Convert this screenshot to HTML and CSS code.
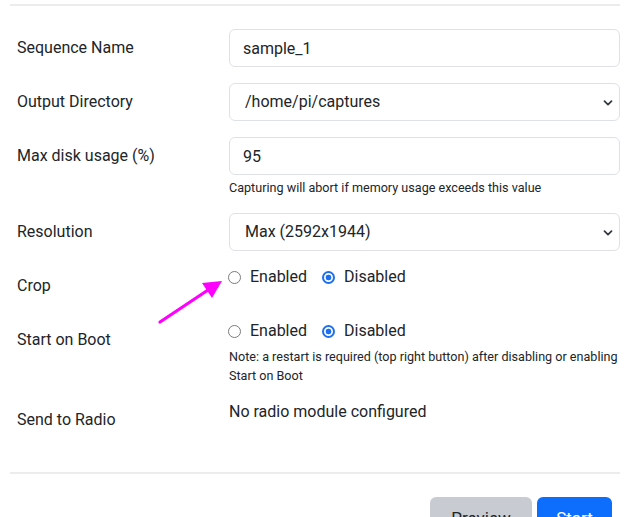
FILE: index.html
```html
<!DOCTYPE html>
<html>
<head>
<meta charset="utf-8">
<link rel="stylesheet" href="styles.css">
</head>
<body>
<div class="page">
  <hr class="rule top-rule">
  <form class="form">
    <div class="row">
      <label class="label">Sequence Name</label>
      <div class="control"><input class="field" type="text" value="sample_1"></div>
    </div>
    <div class="row">
      <label class="label">Output Directory</label>
      <div class="control">
        <div class="select">/home/pi/captures
          <svg class="chev" width="10" height="8" viewBox="0 0 10 8"><path d="M1.5 2.2 5 5.6 8.5 2.2" fill="none" stroke="#343a40" stroke-width="1.8" stroke-linecap="round" stroke-linejoin="round"/></svg>
        </div>
      </div>
    </div>
    <div class="row">
      <label class="label">Max disk usage (%)</label>
      <div class="control">
        <input class="field" type="text" value="95">
        <div class="help">Capturing will abort if memory usage exceeds this value</div>
      </div>
    </div>
    <div class="row">
      <label class="label">Resolution</label>
      <div class="control">
        <div class="select">Max (2592x1944)
          <svg class="chev" width="10" height="8" viewBox="0 0 10 8"><path d="M1.5 2.2 5 5.6 8.5 2.2" fill="none" stroke="#343a40" stroke-width="1.8" stroke-linecap="round" stroke-linejoin="round"/></svg>
        </div>
      </div>
    </div>
    <div class="row">
      <label class="label">Crop</label>
      <div class="control">
        <div class="radios">
          <label class="opt"><span class="radio"></span>Enabled</label>
          <label class="opt"><span class="radio on"></span>Disabled</label>
        </div>
      </div>
    </div>
    <div class="row">
      <label class="label">Start on Boot</label>
      <div class="control">
        <div class="radios">
          <label class="opt"><span class="radio"></span>Enabled</label>
          <label class="opt"><span class="radio on"></span>Disabled</label>
        </div>
        <div class="help note">Note: a restart is required (top right button) after disabling or enabling Start on Boot</div>
      </div>
    </div>
    <div class="row">
      <label class="label">Send to Radio</label>
      <div class="control"><div class="plain">No radio module configured</div></div>
    </div>
  </form>
  <hr class="rule bottom-rule">
  <div class="actions">
    <button class="btn btn-gray" type="button">Preview</button>
    <button class="btn btn-blue" type="button">Start</button>
  </div>
  <svg class="arrow" width="80" height="60" viewBox="0 0 80 60">
    <line x1="4" y1="46" x2="52" y2="14" stroke="#ff00ff" stroke-width="3.2" stroke-linecap="round"/>
    <polygon points="66,5 46,7 56,22" fill="#ff00ff"/>
  </svg>
</div>
</body>
</html>
```

FILE: styles.css
```css
html, body {
  margin: 0;
  padding: 0;
  background: #ffffff;
}

body {
  font-family: Roboto, "Liberation Sans", sans-serif;
  font-size: 16px;
  color: #212529;
}

.page {
  position: relative;
  width: 643px;
  height: 517px;
  overflow: hidden;
  padding: 0 23px 0 10px;
  box-sizing: border-box;
}

.rule {
  border: 0;
  height: 2px;
  background: #ececec;
  margin: 0;
}

.top-rule {
  margin-top: 4px;
}

.form {
  padding-top: 23px;
  padding-bottom: 33px;
}

.row {
  display: grid;
  grid-template-columns: 219px 1fr;
  margin-bottom: 16px;
}

.row:last-child {
  margin-bottom: 0;
}

.label {
  padding: 7px 0 7px 7px;
  line-height: 24px;
}

.control {
  min-width: 0;
}

.field,
.select {
  display: block;
  width: 100%;
  box-sizing: border-box;
  height: 38px;
  border: 1px solid #dee2e6;
  border-radius: 6px;
  padding: 0 13px;
  font: inherit;
  color: #212529;
  background: #fff;
  line-height: 36px;
  outline: none;
}

.select {
  position: relative;
  padding-left: 15px;
}

.chev {
  position: absolute;
  right: 6px;
  top: 15px;
}

.help {
  font-size: 12.6px;
  line-height: 19px;
  margin-top: 3px;
  color: #212529;
}

.note {
  margin-top: 4px;
}

.radios {
  display: flex;
  gap: 16px;
  line-height: 24px;
  margin-top: -2px;
}

.opt {
  display: flex;
  align-items: center;
  gap: 9px;
}

.radio {
  width: 13px;
  height: 13px;
  box-sizing: border-box;
  border: 1px solid #7a7a7a;
  border-radius: 50%;
  background: #fff;
  margin-left: -1px;
}

.radio.on {
  border: 2px solid #1d6ff2;
  background: radial-gradient(circle, #1d6ff2 0 2.6px, #fff 3.2px);
}

.plain {
  line-height: 24px;
  margin-top: -1px;
}

.actions {
  display: flex;
  justify-content: flex-end;
  gap: 5px;
  margin-top: 23px;
  margin-right: 8px;
}

.btn {
  font: inherit;
  font-size: 17px;
  border: 0;
  border-radius: 6px;
  padding: 7px 12px 6px;
  line-height: 24px;
  height: 40px;
}

.btn-gray {
  background: #c8ccd2;
  color: #212529;
  width: 102px;
}

.btn-blue {
  background: #0d6efd;
  color: #fff;
  width: 75px;
}

.arrow {
  position: absolute;
  left: 156px;
  top: 276px;
}
```
